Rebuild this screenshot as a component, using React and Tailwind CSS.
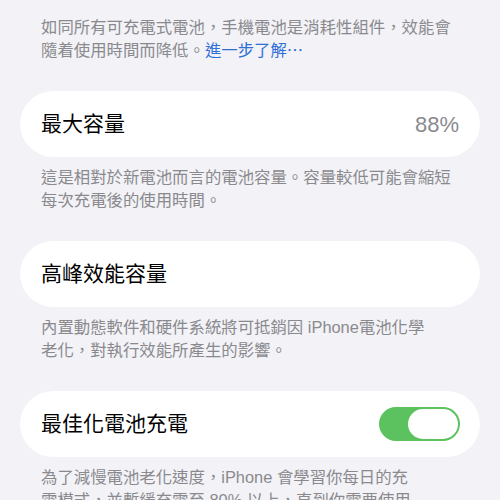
import { useState } from 'react';

const FONT = { fontFamily: '"Liberation Sans", "Noto Sans CJK TC", sans-serif' };

function Footer({ children }) {
  return (
    <div className="mt-[9px] px-[41px] text-[16.4px] leading-[22.5px] text-[#8a8a8e]">
      {children}
    </div>
  );
}

function Card({ children }) {
  return (
    <div className="mx-[20px] mt-[30px] flex h-[66px] items-center justify-between rounded-full bg-white pl-[21px] pr-[21px]">
      {children}
    </div>
  );
}

export default function App() {
  const [on, setOn] = useState(true);

  return (
    <div className="h-[500px] w-[500px] overflow-hidden bg-[#f2f2f7] pt-[7px]" style={FONT}>
      <Footer>
        如同所有可充電式電池，手機電池是消耗性組件，效能會
        <br />
        隨着使用時間而降低。<span className="text-[#2f6fd8]">進一步了解⋯</span>
      </Footer>

      <Card>
        <span className="text-[21px] text-black">最大容量</span>
        <span className="text-[22px] text-[#8a8a8e]">88%</span>
      </Card>
      <Footer>
        這是相對於新電池而言的電池容量。容量較低可能會縮短
        <br />
        每次充電後的使用時間。
      </Footer>

      <Card>
        <span className="text-[21px] text-black">高峰效能容量</span>
      </Card>
      <Footer>
        內置動態軟件和硬件系統將可抵銷因 iPhone電池化學
        <br />
        老化，對執行效能所產生的影響。
      </Footer>

      <Card>
        <span className="text-[21px] text-black">最佳化電池充電</span>
        <button
          type="button"
          onClick={() => setOn(!on)}
          className={[
            'mr-[-1px] flex h-[34px] w-[81px] items-center rounded-full p-[2px]',
            on ? 'justify-end bg-[#5bc25f]' : 'justify-start bg-[#e5e5ea]',
          ].join(' ')}
          aria-label="toggle"
        >
          <span className="h-[30px] w-[50px] rounded-full bg-white" />
        </button>
      </Card>
      <Footer>
        為了減慢電池老化速度，iPhone 會學習你每日的充
        <br />
        電模式，並暫緩充電至 80% 以上，直到你需要使用
      </Footer>
    </div>
  );
}
